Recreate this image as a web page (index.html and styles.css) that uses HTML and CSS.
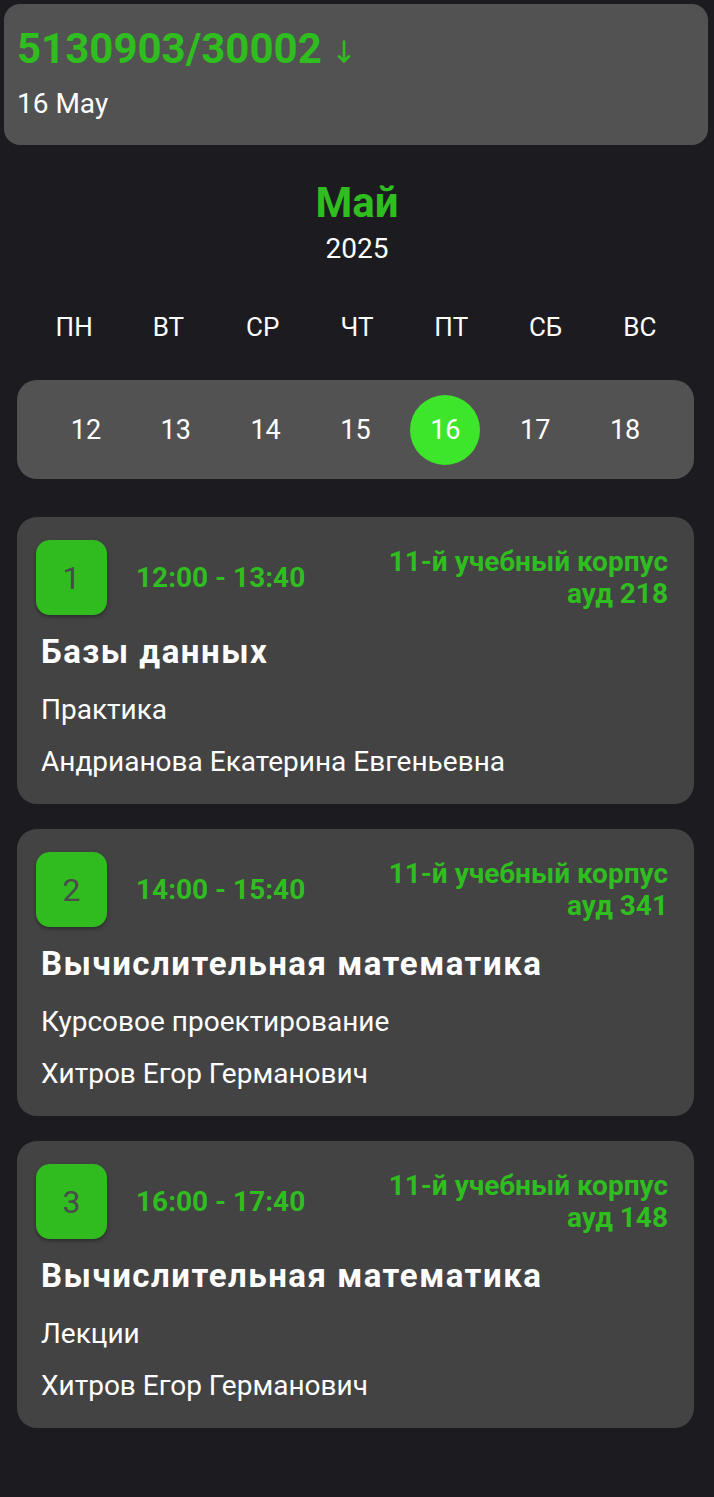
FILE: index.html
```html
<!DOCTYPE html>
<html lang="ru">
<head>
<meta charset="utf-8">
<title>Расписание</title>
<link rel="stylesheet" href="styles.css">
</head>
<body>
<div class="page">
  <header class="top-card">
    <div class="group">5130903/30002 <svg class="arrow" width="14" height="23" viewBox="0 0 14 23" aria-hidden="true"><path d="M7 0.5V21.5M1.2 15.5L7 21.5L12.8 15.5" fill="none" stroke="#2fbd1f" stroke-width="2.6"/></svg></div>
    <div class="today">16 May</div>
  </header>

  <section class="month">
    <div class="month-name">Май</div>
    <div class="year">2025</div>
  </section>

  <div class="weekdays">
    <span>ПН</span><span>ВТ</span><span>СР</span><span>ЧТ</span><span>ПТ</span><span>СБ</span><span>ВС</span>
  </div>

  <div class="dates">
    <span class="date">12</span>
    <span class="date">13</span>
    <span class="date">14</span>
    <span class="date">15</span>
    <span class="date selected">16</span>
    <span class="date">17</span>
    <span class="date">18</span>
  </div>

  <div class="lessons">
    <article class="lesson">
      <div class="lesson-head">
        <div class="num">1</div>
        <div class="time">12:00 - 13:40</div>
        <div class="place">11-й учебный корпус<br>ауд 218</div>
      </div>
      <div class="lesson-body">
        <div class="subject">Базы данных</div>
        <div class="kind">Практика</div>
        <div class="teacher">Андрианова Екатерина Евгеньевна</div>
      </div>
    </article>

    <article class="lesson">
      <div class="lesson-head">
        <div class="num">2</div>
        <div class="time">14:00 - 15:40</div>
        <div class="place">11-й учебный корпус<br>ауд 341</div>
      </div>
      <div class="lesson-body">
        <div class="subject">Вычислительная математика</div>
        <div class="kind">Курсовое проектирование</div>
        <div class="teacher">Хитров Егор Германович</div>
      </div>
    </article>

    <article class="lesson">
      <div class="lesson-head">
        <div class="num">3</div>
        <div class="time">16:00 - 17:40</div>
        <div class="place">11-й учебный корпус<br>ауд 148</div>
      </div>
      <div class="lesson-body">
        <div class="subject">Вычислительная математика</div>
        <div class="kind">Лекции</div>
        <div class="teacher">Хитров Егор Германович</div>
      </div>
    </article>
  </div>
</div>
</body>
</html>
```

FILE: styles.css
```css
* { box-sizing: border-box; }

html, body {
  margin: 0;
  padding: 0;
  background: #1c1b1f;
}

body {
  font-family: Roboto, "Noto Sans", "DejaVu Sans", sans-serif;
  color: #ffffff;
}

.page {
  display: flex;
  flex-direction: column;
  padding-bottom: 70px;
}

.top-card {
  margin: 4px 6px 0 4px;
  background: #525252;
  border-radius: 16px;
  padding: 20px 13px 25px;
}

.group {
  color: #2fbd1f;
  font-size: 42px;
  font-weight: 700;
  line-height: normal;
}

.arrow {
  margin-left: 5px;
  vertical-align: baseline;
}

.today {
  margin-top: 14px;
  font-size: 28px;
  line-height: normal;
}

.month {
  margin-top: 33px;
  display: flex;
  flex-direction: column;
  align-items: center;
}

.month-name {
  color: #2fbd1f;
  font-size: 42px;
  font-weight: 700;
  line-height: normal;
}

.year {
  margin-top: 5px;
  font-size: 28px;
  line-height: normal;
}

.weekdays {
  margin-top: 47px;
  padding: 0 27px;
  display: grid;
  grid-template-columns: repeat(7, 1fr);
  font-size: 26px;
  line-height: normal;
  text-align: center;
}

.dates {
  margin: 38px 20px 0 17px;
  height: 99px;
  background: #525252;
  border-radius: 20px;
  padding: 0 24px;
  display: grid;
  grid-template-columns: repeat(7, 1fr);
  align-items: center;
  justify-items: center;
}

.date {
  width: 70px;
  height: 70px;
  border-radius: 50%;
  display: flex;
  align-items: center;
  justify-content: center;
  font-size: 27px;
}

.date.selected {
  background: #3de62a;
}

.lessons {
  margin: 38px 20px 0 17px;
  display: flex;
  flex-direction: column;
  gap: 25px;
}

.lesson {
  background: #434343;
  border-radius: 20px;
  padding: 23px 26px 26px 19px;
}

.lesson-head {
  display: flex;
  align-items: center;
}

.num {
  width: 71px;
  height: 75px;
  flex: none;
  background: #30bb1f;
  border-radius: 14px;
  box-shadow: 0 2px 4px rgba(0, 0, 0, 0.35);
  display: flex;
  align-items: center;
  justify-content: center;
  color: #4b4b4b;
  font-size: 32px;
}

.time {
  margin-left: 29px;
  color: #2fbd1f;
  font-size: 28px;
  font-weight: 700;
  line-height: normal;
}

.place {
  margin-left: auto;
  text-align: right;
  color: #2fbd1f;
  font-size: 28px;
  font-weight: 700;
  line-height: 32px;
}

.lesson-body {
  padding-left: 5px;
}

.subject {
  margin-top: 17px;
  font-size: 33px;
  font-weight: 700;
  letter-spacing: 1.5px;
  line-height: normal;
}

.kind {
  margin-top: 22px;
  font-size: 28px;
  line-height: normal;
}

.teacher {
  margin-top: 19px;
  font-size: 28px;
  line-height: normal;
}
```
